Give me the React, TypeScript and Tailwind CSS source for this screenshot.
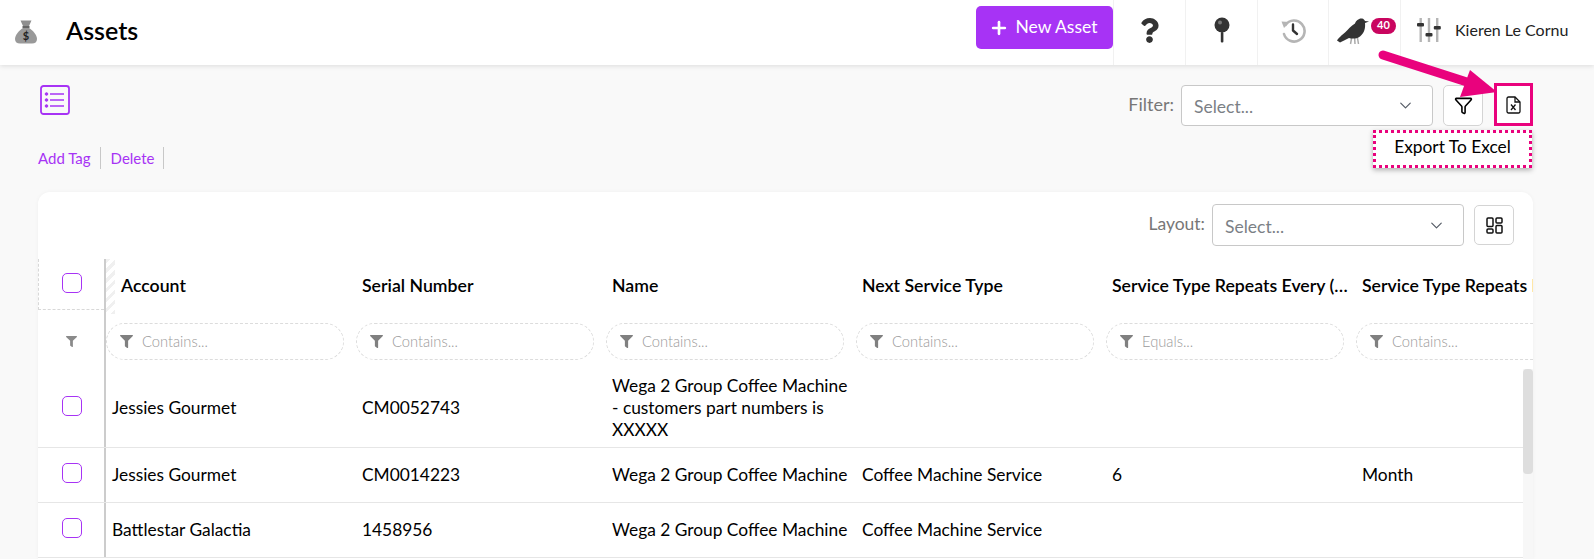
import { ChevronDown, Filter, Plus } from "lucide-react";
import { FaFilter, FaQuestion } from "react-icons/fa";

const PINK = "#e9027d";

const columns = [
  "Account",
  "Serial Number",
  "Name",
  "Next Service Type",
  "Service Type Repeats Every (Number)",
  "Service Type Repeats Every (Period)",
];

const filters = ["Contains...", "Contains...", "Contains...", "Contains...", "Equals...", "Contains..."];

const rows = [
  {
    height: "h-[80px]",
    cells: ["Jessies Gourmet", "CM0052743", "Wega 2 Group Coffee Machine - customers part numbers is XXXXX", "", "", ""],
  },
  {
    height: "h-[55px]",
    cells: ["Jessies Gourmet", "CM0014223", "Wega 2 Group Coffee Machine", "Coffee Machine Service", "6", "Month"],
  },
  {
    height: "h-[55px]",
    cells: ["Battlestar Galactia", "1458956", "Wega 2 Group Coffee Machine", "Coffee Machine Service", "", ""],
  },
];

function MoneyBag() {
  return (
    <svg width="24" height="24" viewBox="0 0 24 24">
      <path d="M6.500 0.500h11l-2.500 5.500h-6z" fill="#8f8f8f" />
      <rect x="8.500" y="6" width="7" height="2" fill="#666" />
      <path d="M9 8h6c4 2.500 8 7 8 11 0 3-2 4.500-5 4.500H6c-3 0-5-1.500-5-4.500 0-4 4-8.500 8-11z" fill="#999" />
      <text x="12" y="20" textAnchor="middle" fontSize="11" fontWeight="700" fill="#222">
        $
      </text>
    </svg>
  );
}

function Pin() {
  return (
    <svg width="16" height="26" viewBox="0 0 16 26">
      <circle cx="8" cy="8" r="7.500" fill="#333" />
      <circle cx="6" cy="5.500" r="2" fill="#777" />
      <rect x="6.800" y="15" width="2.600" height="10.500" rx="1" fill="#333" />
    </svg>
  );
}

function HistoryIcon() {
  return (
    <svg width="26" height="26" viewBox="0 0 26 26" fill="none">
      <path d="M5.500 8a10.500 10.500 0 1 1-1.500 9" stroke="#b5b5b5" strokeWidth="2.600" strokeLinecap="round" />
      <path d="M1.500 4.500l8 .5-5.500 6z" fill="#b5b5b5" />
      <path d="M13 7.500v6l4 3.500" stroke="#333" strokeWidth="2.400" strokeLinecap="round" strokeLinejoin="round" />
    </svg>
  );
}

function Crow() {
  return (
    <svg width="32" height="28" viewBox="0 0 32 28">
      <path d="M15 19l-1.500 8M20 18l1.500 9M17.500 19l.5 8" stroke="#aaa" strokeWidth="1.500" />
      <path
        d="M0 23.500c1-2 5-5.500 8-8 3-3 6-6.500 10-9 1-3 4-5.500 7-5 1.500.3 2.500 1.300 3 2.500l4 .5-4 1.500c.5 5-.5 10-5 13.500-3.500 2.500-8 2.500-11 1.500l-9 4.500z"
        fill="#333"
      />
    </svg>
  );
}

function Sliders() {
  return (
    <svg width="24" height="26" viewBox="0 0 24 26">
      <rect x="2.500" y="1" width="2.400" height="24" fill="#b5b5b5" />
      <rect x="10.800" y="1" width="2.400" height="24" fill="#b5b5b5" />
      <rect x="19" y="1" width="2.400" height="24" fill="#b5b5b5" />
      <rect x="0" y="6" width="7" height="3.400" rx="1" fill="#333" />
      <rect x="8.500" y="16" width="7" height="3.400" rx="1" fill="#333" />
      <rect x="16.800" y="9" width="7" height="3.400" rx="1" fill="#333" />
    </svg>
  );
}

function ListIcon() {
  return (
    <svg width="30" height="30" viewBox="0 0 30 30" fill="none" stroke="#a733f5">
      <rect x="1" y="1" width="28" height="28" rx="2.500" strokeWidth="1.800" />
      <path d="M10 9h14M10 15h14M10 21h14" strokeWidth="1.300" />
      <circle cx="6.500" cy="9" r="1.300" fill="#a733f5" />
      <circle cx="6.500" cy="15" r="1.300" fill="#a733f5" />
      <circle cx="6.500" cy="21" r="1.300" fill="#a733f5" />
    </svg>
  );
}

function ExcelIcon() {
  return (
    <svg width="15" height="18" viewBox="0 0 15 18" fill="none" stroke="#111" strokeWidth="1.300">
      <path d="M2.500 1h6.500l5 5v9.500a1.500 1.500 0 0 1-1.500 1.500h-10A1.500 1.500 0 0 1 1 15.500v-13A1.500 1.500 0 0 1 2.500 1z" />
      <path d="M9 1v5h5" />
      <path d="M5 8.500l4.500 5.500M9.500 8.500L5 14" />
    </svg>
  );
}

function LayoutIcon() {
  return (
    <svg width="17" height="17" viewBox="0 0 17 17" fill="none" stroke="#111" strokeWidth="1.500">
      <rect x="1" y="1" width="6" height="8.500" rx="1" />
      <rect x="10" y="1" width="6" height="5" rx="1" />
      <rect x="1" y="12" width="6" height="4" rx="1" />
      <rect x="10" y="8.500" width="6" height="7.500" rx="1" />
    </svg>
  );
}

function SelectBox({ tall }: { tall?: boolean }) {
  return (
    <div
      className={`flex w-[252px] items-center justify-between rounded-[4px] border border-[#c8c8c8] bg-white pl-[12px] pr-[17px] text-[17.500px] text-[#7b7f86] ${
        tall ? "h-[42px]" : "h-[41px]"
      }`}
    >
      <span className={tall ? "pt-[5px]" : "pt-[4px]"}>Select...</span>
      <ChevronDown size={19} strokeWidth={1.500} className="text-[#555c66]" />
    </div>
  );
}

function HeaderCell({ children, wide }: { children: React.ReactNode; wide?: boolean }) {
  return (
    <div className={`flex h-full items-center justify-center border-l border-[#f1f1f1] pb-[5px] ${wide ? "w-[72px]" : "w-[71px]"}`}>
      {children}
    </div>
  );
}

export default function App() {
  return (
    <div className="relative h-[559px] w-[1594px] overflow-hidden bg-[#f9f9f9] font-[Lato,sans-serif] text-[16px] text-black">
      <header className="flex h-[65px] items-center bg-white shadow-[0_1px_5px_rgba(0,0,0,0.12)]">
        <div className="mb-[2px] ml-[14px]">
          <MoneyBag />
        </div>
        <h1 className="mb-[3px] ml-[28px] text-[25px] font-semibold text-black">Assets</h1>
        <button className="mb-[10px] ml-auto flex h-[43px] w-[137px] items-center justify-center gap-[7px] rounded-[5px] bg-[#a733f5] pr-[3px] text-[17.500px] text-white">
          <Plus size={20} strokeWidth={3.200} />
          New Asset
        </button>
        <div className="flex h-full items-center">
          <HeaderCell wide>
            <FaQuestion size={25} className="text-[#333]" />
          </HeaderCell>
          <HeaderCell wide>
            <Pin />
          </HeaderCell>
          <HeaderCell>
            <HistoryIcon />
          </HeaderCell>
          <div className="flex h-full w-[72px] items-center gap-[2px] border-l border-[#f1f1f1] pb-[4px] pl-[8px]">
            <Crow />
            <span className="mb-[10px] flex h-[16px] w-[25px] shrink-0 items-center justify-center rounded-full bg-[#c9055f] text-[11px] font-bold text-white">
              40
            </span>
          </div>
          <div className="flex h-full w-[194px] items-center border-l border-[#f1f1f1] pb-[5px] pl-[16px]">
            <Sliders />
            <span className="ml-[14px] text-[16px] text-[#222]">Kieren Le Cornu</span>
          </div>
        </div>
      </header>

      <main className="pl-[38px] pr-[61px]">
        <div className="flex items-start justify-between pt-[20px]">
          <div className="ml-[2px]">
            <ListIcon />
          </div>
          <div className="flex items-start">
            <span className="mr-[7px] mt-[6px] text-[18px] text-[#777]">Filter:</span>
            <SelectBox />
            <button className="ml-[10px] flex h-[41px] w-[40px] items-center justify-center rounded-[5px] border border-[#d4d4d4] bg-white">
              <Filter size={19} strokeWidth={2} className="text-black" />
            </button>
            <button className="-mt-[2px] ml-[11px] flex h-[43px] w-[39px] items-center justify-center border-[3px] border-[#e9027d] bg-white">
              <ExcelIcon />
            </button>
          </div>
        </div>

        <div className="mt-[21px] flex h-[22px] items-center text-[15px] text-[#a733f5]">
          <span className="border-r border-[#c8c8c8] pr-[9px] leading-[22px]">Add Tag</span>
          <span className="border-r border-[#c8c8c8] pl-[10px] pr-[9px] leading-[22px]">Delete</span>
        </div>

        <section className="relative mt-[23px] h-[367px] overflow-hidden rounded-t-[12px] bg-white shadow-[0_0_4px_rgba(0,0,0,0.04)]">
          <div className="flex items-start justify-end pr-[19px] pt-[12px]">
            <span className="mr-[7px] mt-[7px] text-[17.500px] text-[#777]">Layout:</span>
            <SelectBox tall />
            <button className="ml-[10px] mt-[1px] flex h-[40px] w-[40px] items-center justify-center rounded-[5px] border border-[#d4d4d4] bg-white">
              <LayoutIcon />
            </button>
          </div>

          <div className="mt-[13px]">
            <div className="flex h-[51px]">
              <div className="flex w-[66px] shrink-0 items-center justify-center border-b border-l border-dashed border-[#d8d8d8] pb-[3px] pl-[1px]">
                <span className="h-[20px] w-[20px] rounded-[5px] border border-[#a733f5]" />
              </div>
              <div className="relative flex w-[1429px] border-l-2 border-[#ccc]">
                <div className="absolute left-0 top-0 h-[55px] w-[9px] bg-[repeating-linear-gradient(135deg,#f0f0f0_0,#f0f0f0_3px,#fff_3px,#fff_7px)]" />
                {columns.map((c, i) => (
                  <div
                    key={c}
                    className={`w-[250px] shrink-0 truncate pt-[17px] text-[17.700px] font-semibold leading-[20px] text-black ${
                      i === 0 ? "pl-[15px]" : "pl-[6px] pr-[5px]"
                    }`}
                  >
                    {c}
                  </div>
                ))}
              </div>
            </div>

            <div className="flex h-[58px]">
              <div className="flex w-[66px] shrink-0 items-start justify-center pt-[26px]">
                <FaFilter size={11} className="text-[#8a8a8a]" />
              </div>
              <div className="relative flex w-[1429px] overflow-hidden border-l-2 border-[#ccc]">
                {filters.map((f, i) => (
                  <div key={i} className="w-[250px] shrink-0 pt-[13px]">
                    <div className="flex h-[37px] w-[238px] items-center gap-[9px] rounded-full border border-dashed border-[#dcdcdc] pl-[13px] text-[14.700px] font-light text-[#9a9a9a]">
                      <FaFilter size={13} className="text-[#808080]" />
                      {f}
                    </div>
                  </div>
                ))}
              </div>
            </div>

            {rows.map((r, i) => (
              <div key={i} className={`flex ${r.height} border-b border-[#e6e6e6]`}>
                <div className="flex w-[66px] shrink-0 items-center justify-center pb-[4px] pl-[1px]">
                  <span className="h-[20px] w-[20px] rounded-[5px] border border-[#a733f5]" />
                </div>
                <div className="flex w-[1429px] overflow-hidden border-l-2 border-[#ccc]">
                  {r.cells.map((c, j) => (
                    <div key={j} className="flex w-[250px] shrink-0 items-center pl-[6px] pr-[5px] text-[17.350px] leading-[22px]">
                      {c}
                    </div>
                  ))}
                </div>
              </div>
            ))}
          </div>

          <div className="absolute right-0 top-[177px] h-[190px] w-[10px] bg-[#f7f7f7]">
            <div className="h-[105px] rounded-[4px] bg-[#dedede]" />
          </div>
        </section>
      </main>

      <svg className="absolute left-[1375px] top-[45px]" width="130" height="60" viewBox="0 0 130 60" fill="none">
        <path d="M8 10L95 38" stroke={PINK} strokeWidth="9" strokeLinecap="round" />
        <path d="M95 25L122 47L85 52z" fill={PINK} />
      </svg>

      <div className="absolute left-[1373px] top-[130px] flex h-[38px] w-[159px] items-center justify-center border-[3px] border-dotted border-[#e9027d] bg-white pb-[3px] text-[17.350px] text-black shadow-[0_2px_5px_rgba(0,0,0,0.3)]">
        Export To Excel
      </div>
    </div>
  );
}
